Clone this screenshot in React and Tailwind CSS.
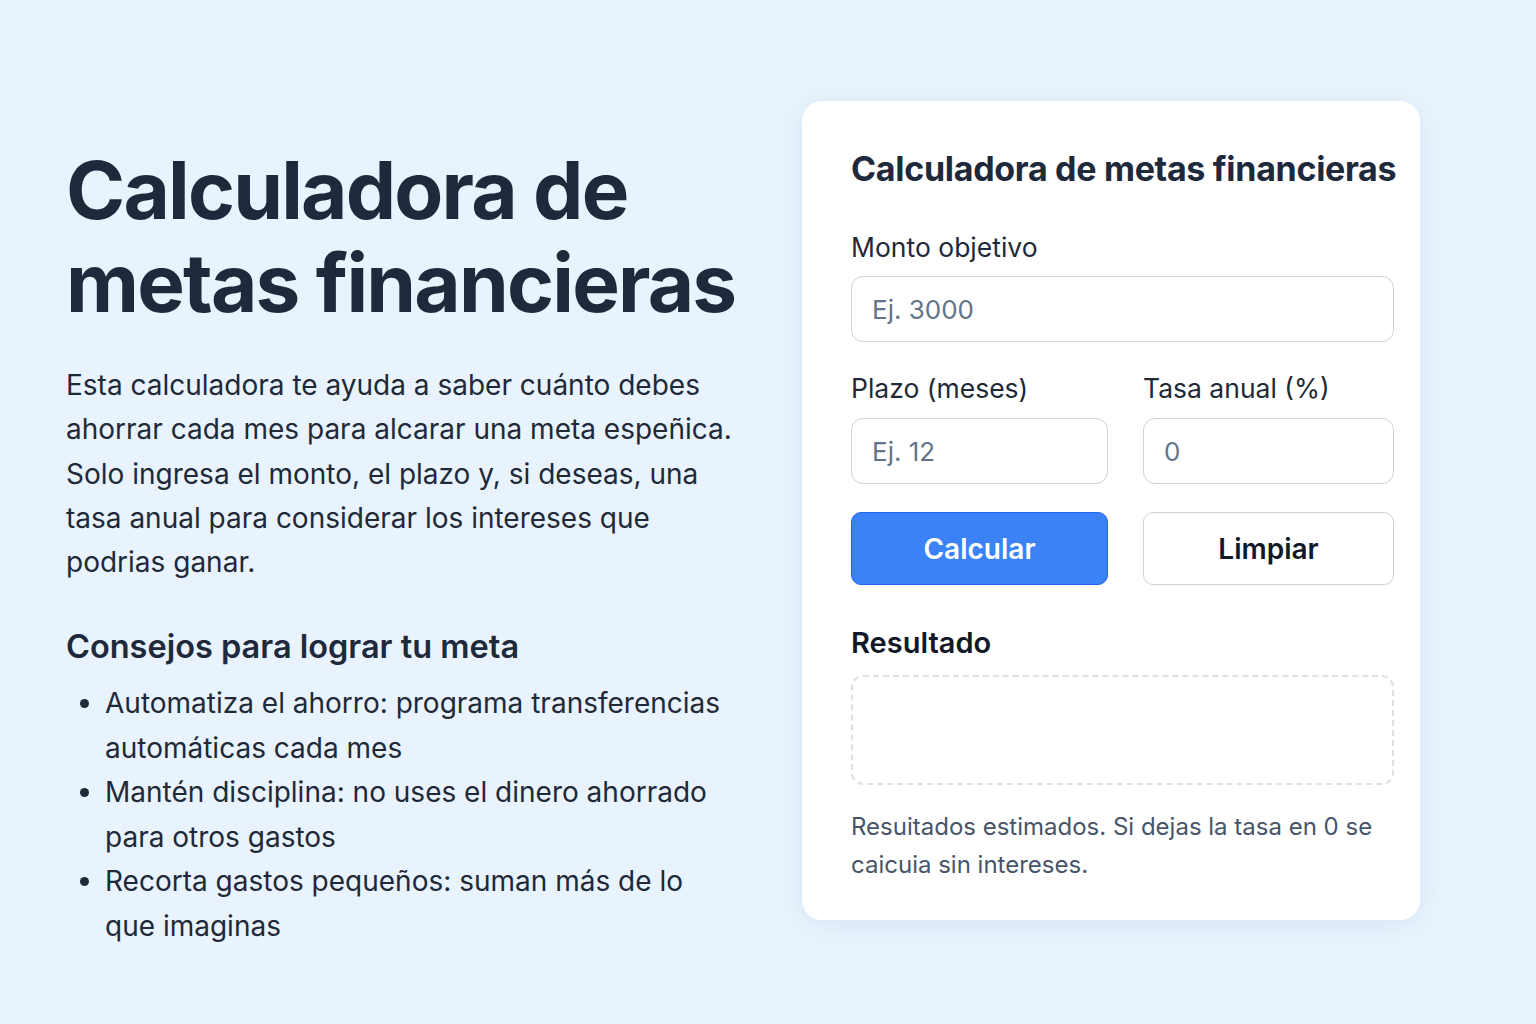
import { useState } from "react";

function App() {
  const [monto, setMonto] = useState("");
  const [plazo, setPlazo] = useState("");
  const [tasa, setTasa] = useState("");
  const [resultado, setResultado] = useState(null);

  const calcular = () => {
    const m = parseFloat(monto);
    const n = parseInt(plazo);
    const r = (parseFloat(tasa) || 0) / 1200;
    if (!(m > 0) || !(n > 0)) {
      setResultado("Datos inválidos");
      return;
    }
    const pago = r === 0 ? m / n : (m * r) / (Math.pow(1 + r, n) - 1);
    setResultado("Ahorro mensual: $" + pago.toFixed(2));
  };

  const limpiar = () => {
    setMonto("");
    setPlazo("");
    setTasa("");
    setResultado(null);
  };

  return (
    <div className="min-h-screen w-full bg-[#e8f3fd] font-['Inter','Noto_Sans',sans-serif] text-[#1e293b]">
      <div className="flex items-start gap-[56px] pl-[66px] pt-[101px]">
        <div className="w-[680px] shrink-0 pt-[42px]">
          <h1 className="text-[80px] leading-[93px] font-bold tracking-[-1.8px] text-[#1e293b]">
            Calculadora de metas financieras
          </h1>
          <p className="mt-[34px] text-[28px] leading-[44.3px] text-[#1f2937]">
            Esta calculadora te ayuda a saber cuánto debes ahorrar cada mes para alcarar una meta espeñica. Solo ingresa el monto, el plazo y, si deseas, una tasa anual para considerar los intereses que podrias ganar.
          </p>
          <h2 className="mt-[43px] text-[32.5px] leading-[40px] font-semibold text-[#1e293b]">
            Consejos para lograr tu meta
          </h2>
          <ul className="mt-[14px] list-disc pl-[39px] pr-[13px] text-[28px] leading-[44.5px] text-[#1f2937]">
            <li>Automatiza el ahorro: programa transferencias automáticas cada mes</li>
            <li>Mantén disciplina: no uses el dinero ahorrado para otros gastos</li>
            <li>Recorta gastos pequeños: suman más de lo que imaginas</li>
          </ul>
        </div>

        <div className="w-[618px] shrink-0 rounded-[20px] bg-white pl-[49px] pr-[27px] pt-[46px] pb-[37px] shadow-[0_4px_28px_rgba(30,64,120,0.08)]">
          <h2 className="text-[34px] leading-[44px] font-bold text-[#1e293b] tracking-[-0.3px] whitespace-nowrap">
            Calculadora de metas financieras
          </h2>

          <label className="mt-[39px] block text-[26.5px] leading-[34px] text-[#1f2937]">Monto objetivo</label>
          <input
            type="number"
            placeholder="Ej. 3000"
            value={monto}
            onChange={(e) => setMonto(e.target.value)}
            className="mt-[12px] block h-[66px] w-[543px] rounded-[12px] border border-[#cbd2da] bg-white px-[20px] text-[26px] text-[#1f2937] placeholder:text-[#64748b] outline-none"
          />

          <div className="mt-[29px] grid w-[543px] grid-cols-[257px_251px] gap-x-[35px]">
            <label className="block text-[26.5px] leading-[34px] text-[#1f2937]">Plazo (meses)</label>
            <label className="block text-[26.5px] leading-[34px] text-[#1f2937]">Tasa anual (%)</label>
            <input
              type="number"
              placeholder="Ej. 12"
              value={plazo}
              onChange={(e) => setPlazo(e.target.value)}
              className="mt-[13px] block h-[66px] w-full rounded-[12px] border border-[#cbd2da] bg-white px-[20px] text-[26px] text-[#1f2937] placeholder:text-[#64748b] outline-none"
            />
            <input
              type="number"
              placeholder="0"
              value={tasa}
              onChange={(e) => setTasa(e.target.value)}
              className="mt-[13px] block h-[66px] w-full rounded-[12px] border border-[#cbd2da] bg-white px-[20px] text-[26px] text-[#1f2937] placeholder:text-[#64748b] outline-none"
            />
            <button
              onClick={calcular}
              className="mt-[28px] h-[73px] rounded-[10px] border border-[#2563eb] bg-[#3b82f6] text-[28px] font-semibold text-white"
            >
              Calcular
            </button>
            <button
              onClick={limpiar}
              className="mt-[28px] h-[73px] rounded-[10px] border border-[#cbd2da] bg-white text-[28px] font-semibold text-[#111827]"
            >
              Limpiar
            </button>
          </div>

          <h3 className="mt-[39px] text-[29px] leading-[38px] font-semibold text-[#111827]">Resultado</h3>
          <div className="mt-[13px] flex h-[110px] w-[543px] items-center justify-center rounded-[12px] border-2 border-dashed border-[#dde1e6] text-[26px] text-[#1f2937]">
            {resultado}
          </div>

          <p className="mt-[23px] text-[24px] leading-[37.5px] text-[#475569]">
            Resuitados estimados. Si dejas la tasa en 0 se caicuia sin intereses.
          </p>
        </div>
      </div>
    </div>
  );
}

export default App;
